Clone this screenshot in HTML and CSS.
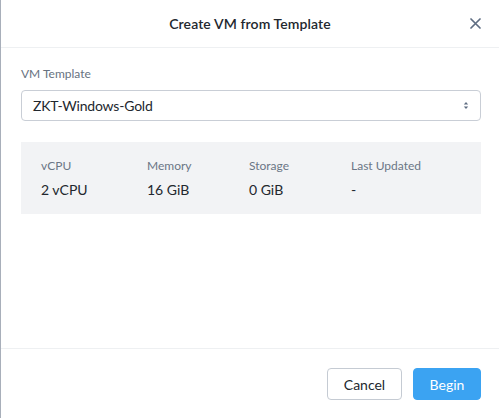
FILE: index.html
```html
<!DOCTYPE html>
<html>
<head>
<meta charset="utf-8">
<link rel="stylesheet" href="styles.css">
</head>
<body>
<div class="modal">
  <header class="modal-header">
    <h1 class="modal-title">Create VM from Template</h1>
    <button class="close-btn" aria-label="Close">
      <svg width="11" height="11" viewBox="0 0 11 11"><path d="M1 1L10 10M10 1L1 10" stroke="#5e6d82" stroke-width="1.7" stroke-linecap="round"/></svg>
    </button>
  </header>
  <main class="modal-body">
    <label class="field-label">VM Template</label>
    <div class="select">
      <span class="select-value">ZKT-Windows-Gold</span>
      <svg class="select-arrow" width="6" height="9" viewBox="0 0 6 9"><path d="M3 1L5.2 3.5H0.8Z M3 8L5.2 5.5H0.8Z" fill="#5e6d82"/></svg>
    </div>
    <div class="info-box">
      <div class="info-col">
        <div class="info-label">vCPU</div>
        <div class="info-value">2 vCPU</div>
      </div>
      <div class="info-col">
        <div class="info-label">Memory</div>
        <div class="info-value">16 GiB</div>
      </div>
      <div class="info-col">
        <div class="info-label">Storage</div>
        <div class="info-value">0 GiB</div>
      </div>
      <div class="info-col">
        <div class="info-label">Last Updated</div>
        <div class="info-value">-</div>
      </div>
    </div>
  </main>
  <footer class="modal-footer">
    <button class="btn btn-secondary">Cancel</button>
    <button class="btn btn-primary">Begin</button>
  </footer>
</div>
</body>
</html>
```

FILE: styles.css
```css
* { box-sizing: border-box; }
html, body { margin: 0; padding: 0; background: #ffffff; }
body {
  font-family: Lato, "Noto Sans", "Liberation Sans", sans-serif;
  color: #22272e;
}
.modal {
  width: 499px;
  height: 418px;
  border-left: 1px solid #a8afba;
  display: flex;
  flex-direction: column;
  background: #fff;
}
.modal-header {
  height: 48px;
  border-bottom: 1px solid #eef0f2;
  display: flex;
  align-items: center;
  justify-content: center;
  position: relative;
}
.modal-title {
  margin: 0;
  font-size: 14px;
  font-weight: 600;
  color: #22272e;
  letter-spacing: 0.1px;
}
.close-btn {
  position: absolute;
  right: 18px;
  top: 17px;
  width: 12px;
  height: 12px;
  padding: 0;
  border: 0;
  background: none;
  display: flex;
  align-items: center;
  justify-content: center;
}
.modal-body {
  flex: 1;
  padding: 19px 18px 0 20px;
  display: flex;
  flex-direction: column;
}
.field-label {
  font-size: 12px;
  line-height: 14px;
  color: #67727f;
}
.select {
  margin-top: 9px;
  height: 31px;
  border: 1px solid #c9ced6;
  border-radius: 4px;
  display: flex;
  align-items: center;
  justify-content: space-between;
  padding: 0 11px 0 11px;
}
.select-value {
  font-size: 14px;
  color: #22272e;
  letter-spacing: -0.2px;
}
.info-box {
  margin-top: 21px;
  height: 72px;
  background: #f2f3f5;
  padding: 17px 20px 0 20px;
  display: grid;
  grid-template-columns: 106px 102px 102px 1fr;
}
.info-label {
  font-size: 12px;
  line-height: 14px;
  color: #6b7685;
}
.info-value {
  margin-top: 9px;
  font-size: 14px;
  line-height: 16px;
  color: #22272e;
}
.modal-footer {
  height: 70px;
  border-top: 1px solid #eef0f2;
  display: flex;
  justify-content: flex-end;
  align-items: flex-start;
  gap: 11px;
  padding: 19px 18px 0 0;
}
.btn {
  height: 32px;
  border-radius: 4px;
  font-family: inherit;
  font-size: 14px;
  padding: 0;
  cursor: pointer;
}
.btn-secondary {
  width: 75px;
  background: #fff;
  border: 1px solid #c5cbd3;
  color: #22272e;
}
.btn-primary {
  width: 68px;
  background: #3ba3f2;
  border: 1px solid #3ba3f2;
  color: #fff;
}
```
